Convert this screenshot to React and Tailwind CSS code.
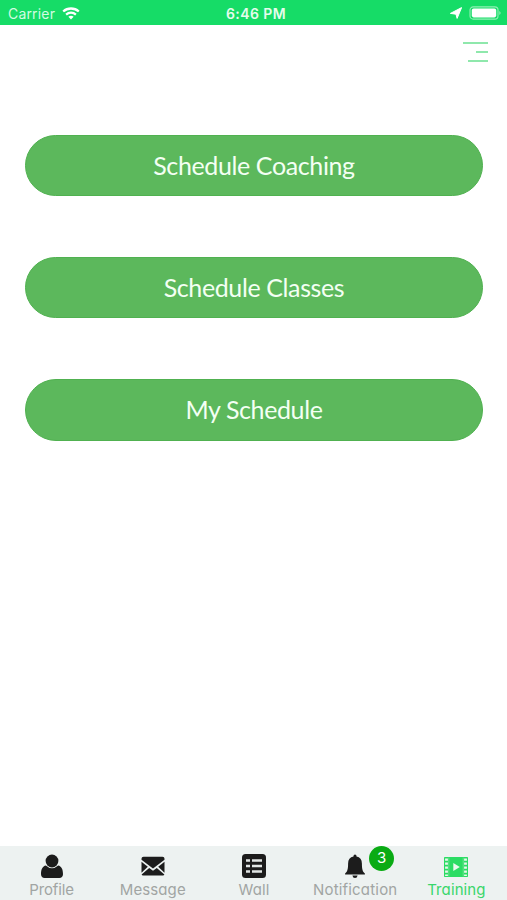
import React from "react";

function StatusBar() {
  return (
    <header className="grid h-[25px] shrink-0 grid-cols-3 items-center bg-[#16dc67] font-['Inter',sans-serif] text-white">
      <div className="flex items-center gap-[7px] pl-2 pt-[2px]">
        <span className="text-[14px] leading-none tracking-[0.18px] text-[#d3fbe2]">Carrier</span>
        <svg className="h-[13px] w-[18px]" viewBox="0 0 18 13" fill="none">
          <path d="M1.2 4.5C5.6.5 12.4.5 16.8 4.5" stroke="currentColor" strokeWidth="2.3" />
          <path d="M4.1 7.6C6.9 5 11.1 5 13.9 7.6" stroke="currentColor" strokeWidth="2.2" />
          <path d="M6.4 9.7Q9 7.6 11.6 9.7L9 12.5Z" fill="currentColor" />
        </svg>
      </div>
      <span className="pl-[5px] pt-[2px] text-center text-[14px] font-semibold leading-none tracking-[0.4px] text-[#e5fced]">
        6:46 PM
      </span>
      <div className="flex items-center justify-end gap-[7px] pr-[5px] pt-px">
        <svg className="h-3 w-3" viewBox="0 0 12 12">
          <path d="M11.6.6 7.1 11.4 6 7.2.4 6.4Z" fill="currentColor" stroke="currentColor" strokeWidth="1" strokeLinejoin="round" />
        </svg>
        <svg className="h-[14px] w-[33px]" viewBox="0 0 33 14">
          <rect x="1" y=".9" width="28" height="12.2" rx="3.2" fill="none" stroke="#92efb6" strokeWidth="1.1" />
          <rect x="2.8" y="2.6" width="24.4" height="8.8" rx="1.8" fill="currentColor" />
          <path d="M30.3 5Q33 7 30.3 9Z" fill="#92efb6" />
        </svg>
      </div>
    </header>
  );
}

function ProfileIcon() {
  return (
    <svg className="h-6 w-6" viewBox="0 0 24 24" fill="#1c1c1c">
      <path d="M5.8 11.5C2.7 12.2 1 15 1 20.3 1 22.5 2.5 24 4.6 24h14.8c2.1 0 3.6-1.5 3.6-3.7 0-5.3-1.7-8.1-4.8-8.8Q12 17 5.8 11.5Z" />
      <circle cx="12" cy="7" r="6.4" />
    </svg>
  );
}

function MessageIcon() {
  return (
    <svg className="h-6 w-6" viewBox="0 0 24 24" fill="#1c1c1c">
      <path d="M.5 4.8Q.5 2.8 2.5 2.8h19q2 0 2 2v.9L12 14.6.5 5.7Z" />
      <path d="m.5 7.8 6.3 5L.5 18.8Z" />
      <path d="m23.5 7.8-6.3 5 6.3 6Z" />
      <path d="m8.2 13.9 3.8 2.9 3.8-2.9 7.6 6.6q-.5.9-1.4.9H2q-.9 0-1.4-.9Z" />
    </svg>
  );
}

function WallIcon() {
  return (
    <svg className="h-6 w-6" viewBox="0 0 24 24">
      <rect width="24" height="24" rx="3.5" fill="#1c1c1c" />
      <path d="M4 6.5h4m2 0h10M4 12h4m2 0h10M4 17.5h4m2 0h10" fill="none" stroke="#e2e6e5" strokeWidth="2.3" />
    </svg>
  );
}

function BellIcon() {
  return (
    <svg className="h-6 w-6" viewBox="0 0 24 24" fill="#1c1c1c">
      <path d="M10.5 1.9Q10.5.4 12 .4t1.5 1.5v.7c3.5.7 5.4 3 5.4 6.8 0 6 .8 8.2 3 10.1v1H2.1v-1c2.2-1.9 3-4.1 3-10.1 0-3.8 1.9-6.1 5.4-6.8Z" />
      <path d="M9.4 21.5h5.2Q14.2 24 12 24t-2.6-2.5Z" />
    </svg>
  );
}

function TrainingIcon() {
  return (
    <svg className="h-6 w-6" viewBox="0 0 24 24">
      <rect y="3" width="24" height="20" rx=".7" fill="#2bdc63" />
      <path d="M1.1 4.4h2.8v2.4H1.1zm0 4h2.8v2.4H1.1zm0 4h2.8v2.4H1.1zm0 4h2.8v2.4H1.1zm0 4h2.8v1.6H1.1zM20.1 4.4h2.8v2.4h-2.8zm0 4h2.8v2.4h-2.8zm0 4h2.8v2.4h-2.8zm0 4h2.8v2.4h-2.8zm0 4h2.8v1.6h-2.8z" fill="#e9f6ed" />
      <path d="M4.8 3.6v18.8M19.2 3.6v18.8" stroke="#8eeaab" strokeWidth=".6" />
      <path d="m9.3 8.9 6.5 4.1-6.5 4.1Z" fill="#e9f9ed" />
    </svg>
  );
}

const tabs = [
  { label: "Profile", Icon: ProfileIcon, text: "tracking-[-0.1px] text-[#a1a5a3]" },
  { label: "Message", Icon: MessageIcon, text: "tracking-[0.1px] text-[#a1a5a3]" },
  { label: "Wall", Icon: WallIcon, text: "tracking-[0.1px] text-[#a1a5a3]" },
  { label: "Notification", Icon: BellIcon, text: "tracking-[0.18px] text-[#a1a5a3]", badge: 3 },
  { label: "Training", Icon: TrainingIcon, text: "tracking-[0.1px] text-[#39d66b]" },
];

export default function App() {
  return (
    <div className="flex h-screen flex-col overflow-hidden bg-white">
      <StatusBar />
      <div className="flex h-[110px] shrink-0 justify-end pr-[19px] pt-[17px]">
        <button aria-label="Menu" className="flex h-5 w-[25px] flex-col items-end justify-between">
          <span className="h-[2px] w-[25px] bg-[#8fe8ac]" />
          <span className="h-[2px] w-3 bg-[#8fe8ac]" />
          <span className="h-[2px] w-5 bg-[#8fe8ac]" />
        </button>
      </div>
      <main className="flex flex-1 flex-col gap-[61px] pl-[25px] pr-[24px] font-['Lato',sans-serif]">
        {["Schedule Coaching", "Schedule Classes", "My Schedule"].map((label) => (
          <button key={label} className="h-[61.2px] w-full shrink-0 rounded-full border border-[#50b150] bg-[#5cb85c] text-[25px] leading-none tracking-[-0.38px] text-[#f3fff3]">
            {label}
          </button>
        ))}
      </main>
      <nav className="grid h-[54px] shrink-0 grid-cols-5 bg-[#edf2f1] pl-px font-['Inter',sans-serif]">
        {tabs.map(({ label, Icon, text, badge }) => (
          <div key={label} className="flex flex-col items-center pt-2">
            <div className="relative">
              <Icon />
              {badge && (
                <span className="absolute -top-2 left-[26px] flex h-[25px] w-[25px] items-center justify-center rounded-full bg-[#0aab14] text-[15px] text-white">
                  {badge}
                </span>
              )}
            </div>
            <span className={`mt-[2px] whitespace-nowrap text-[15px] leading-5 [font-feature-settings:'cv11'] ${text}`}>{label}</span>
          </div>
        ))}
      </nav>
    </div>
  );
}
